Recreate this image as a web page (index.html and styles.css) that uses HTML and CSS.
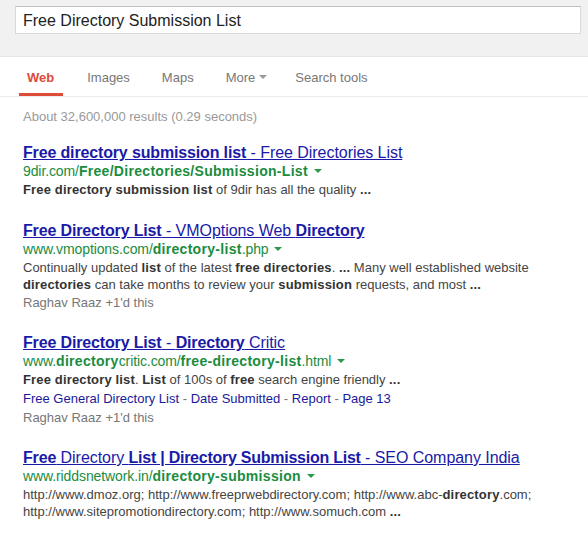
FILE: index.html
```html
<!DOCTYPE html>
<html>
<head>
<meta charset="utf-8">
<link rel="stylesheet" href="styles.css">
</head>
<body>
<div class="header">
  <div class="searchbox">Free Directory Submission List</div>
</div>
<div class="nav">
  <span class="tab active">Web</span>
  <span class="tab">Images</span>
  <span class="tab">Maps</span>
  <span class="tab">More <span class="caret gray"></span></span>
  <span class="tab tools">Search tools</span>
</div>
<div class="results">
  <div class="count">About 32,600,000 results (0.29 seconds)</div>

  <div class="result">
    <div class="title"><b>Free directory submission list</b> - Free Directories List</div>
    <div class="url">9dir.com/<b>Free/Directories/Submission-List</b> <span class="caret green"></span></div>
    <div class="snippet"><b>Free directory submission list</b> of 9dir has all the quality <b>...</b></div>
  </div>

  <div class="result">
    <div class="title"><b>Free Directory List</b> - VMOptions Web <b>Directory</b></div>
    <div class="url">www.vmoptions.com/<b>directory-list</b>.php <span class="caret green"></span></div>
    <div class="snippet">Continually updated <b>list</b> of the latest <b>free directories</b>. <b>...</b> Many well established website<br><b>directories</b> can take months to review your <b>submission</b> requests, and most <b>...</b></div>
    <div class="plus">Raghav Raaz +1'd this</div>
  </div>

  <div class="result">
    <div class="title"><b>Free Directory List</b> - <b>Directory</b> Critic</div>
    <div class="url">www.<b>directory</b>critic.com/<b>free-directory-list</b>.html <span class="caret green"></span></div>
    <div class="snippet"><b>Free directory list</b>. <b>List</b> of 100s of <b>free</b> search engine friendly <b>...</b></div>
    <div class="sitelinks"><span class="sl">Free General Directory List</span> - <span class="sl">Date Submitted</span> - <span class="sl">Report</span> - <span class="sl">Page 13</span></div>
    <div class="plus">Raghav Raaz +1'd this</div>
  </div>

  <div class="result">
    <div class="title"><b>Free</b> Directory <b class="tight">List | Directory Submission List</b> - SEO Company India</div>
    <div class="url">www.riddsnetwork.in/<b>directory-submission</b> <span class="caret green"></span></div>
    <div class="snippet">http://www.dmoz.org; http://www.freeprwebdirectory.com; http://www.abc-<b>directory</b>.com;<br>http://www.sitepromotiondirectory.com; http://www.somuch.com <b>...</b></div>
  </div>
</div>
</body>
</html>
```

FILE: styles.css
```css
html, body {
  margin: 0;
  padding: 0;
  background: #fff;
  font-family: Arial, "Liberation Sans", sans-serif;
}
.header {
  background: #f1f1f1;
  height: 57px;
  border-bottom: 1px solid #e5e5e5;
  box-sizing: border-box;
  padding: 6px 7px 0 15px;
}
.searchbox {
  background: #fff;
  border: 1px solid #d9d9d9;
  border-top-color: #c0c0c0;
  height: 28px;
  box-sizing: border-box;
  padding: 1px 0 0 7px;
  font-size: 16px;
  line-height: 26px;
  color: #222;
}
.nav {
  display: flex;
  height: 40px;
  box-sizing: border-box;
  border-bottom: 1px solid #ebebeb;
  padding-left: 19px;
  gap: 16px;
  font-size: 13px;
  color: #777;
}
.tab {
  padding: 1px 8px 0;
  height: 39px;
  box-sizing: border-box;
  display: flex;
  align-items: center;
  gap: 4px;
}
.tab.tools {
  margin-left: -4px;
}
.tab.active {
  color: #dd4b39;
  font-weight: bold;
  border-bottom: 3px solid #dd4b39;
  padding: 4px 9px 0 8px;
}
.caret {
  display: inline-block;
  width: 0;
  height: 0;
  border-left: 4px solid transparent;
  border-right: 4px solid transparent;
  border-top: 4px solid #999;
  vertical-align: middle;
}
.caret.green {
  border-top-color: #2a9a48;
  margin-left: 2px;
  position: relative;
  top: -1px;
}
.results {
  padding-left: 23px;
  font-size: 13px;
  line-height: 18px;
}
.count {
  color: #999;
  margin-top: 11px;
  margin-bottom: 18px;
}
.result {
  margin-bottom: 22px;
}
.result:nth-child(2) {
  margin-bottom: 24px;
}
.title {
  font-size: 16px;
  line-height: 18px;
  color: #1a1aa8;
  text-decoration: underline;
  letter-spacing: -0.05px;
}
.title b {
  letter-spacing: -0.15px;
}
.title b.tight {
  letter-spacing: -0.25px;
}
.url {
  color: #1a8c3e;
  font-size: 14px;
  line-height: 18px;
  letter-spacing: -0.1px;
}
.url b {
  letter-spacing: 0.3px;
}
.snippet {
  color: #444;
  line-height: 17px;
  margin-top: 1px;
}
.snippet b {
  color: #333;
  letter-spacing: 0.15px;
}
.sitelinks {
  color: #777;
  line-height: 19px;
  margin-top: 1px;
}
.sl {
  color: #1a1a99;
}
.plus {
  color: #777;
  line-height: 19px;
}
```
